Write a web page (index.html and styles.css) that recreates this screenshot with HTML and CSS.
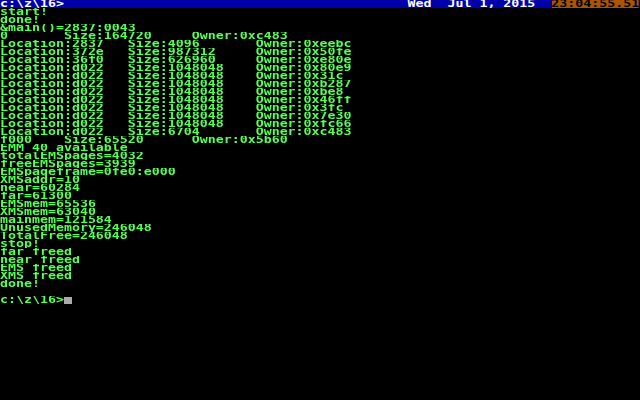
FILE: index.html
```html
<!DOCTYPE html>
<html lang="en">

<head>
    <meta charset="UTF-8">
    <title>c:\z\16</title>
    <link rel="stylesheet" href="styles.css">
</head>

<body>
    <div class="screen">
        <div class="line status"><span class="path">c:\z\16&gt;</span>                                           <span class="date">Wed  Jul 1, 2015</span>  <span class="clock">23:04:55.51</span></div>
        <div class="line">start!</div>
        <div class="line">done!</div>
        <div class="line">&amp;main()=2837:0043</div>
        <div class="line">0       Size:164720     Owner:0xc483</div>
        <div class="line">Location:2837   Size:4096       Owner:0xeebc</div>
        <div class="line">Location:372e   Size:987312     Owner:0x50fe</div>
        <div class="line">Location:36f0   Size:626960     Owner:0xe80e</div>
        <div class="line">Location:d022   Size:1048048    Owner:0x80e9</div>
        <div class="line">Location:d022   Size:1048048    Owner:0x31c</div>
        <div class="line">Location:d022   Size:1048048    Owner:0xb287</div>
        <div class="line">Location:d022   Size:1048048    Owner:0xbe8</div>
        <div class="line">Location:d022   Size:1048048    Owner:0x46ff</div>
        <div class="line">Location:d022   Size:1048048    Owner:0x3fc</div>
        <div class="line">Location:d022   Size:1048048    Owner:0x7e30</div>
        <div class="line">Location:d022   Size:1048048    Owner:0xfc66</div>
        <div class="line">Location:d022   Size:6704       Owner:0xc483</div>
        <div class="line">f000    Size:65520      Owner:0x5b60</div>
        <div class="line">EMM 40 available</div>
        <div class="line">totalEMSpages=4032</div>
        <div class="line">freeEMSpages=3939</div>
        <div class="line">EMSpageframe=0fe0:e000</div>
        <div class="line">XMSaddr=10</div>
        <div class="line">near=60284</div>
        <div class="line">far=61300</div>
        <div class="line">EMSmem=65536</div>
        <div class="line">XMSmem=63040</div>
        <div class="line">mainmem=121584</div>
        <div class="line">UnusedMemory=246048</div>
        <div class="line">TotalFree=246048</div>
        <div class="line">stop!</div>
        <div class="line">far freed</div>
        <div class="line">near freed</div>
        <div class="line">EMS freed</div>
        <div class="line">XMS freed</div>
        <div class="line">done!</div>
        <div class="line"> </div>
        <div class="line">c:\z\16&gt;<span class="cursor"> </span></div>
    </div>
</body>

</html>
```

FILE: styles.css
```css
body {
    margin: 0;
    background-color: #000;
    overflow: hidden;
}

/* 80 columns of 6px, stretched to 8px cells */
.screen {
    width: 480px;
    height: 400px;
    font-family: 'DejaVu Sans Mono', monospace;
    font-size: 9.965px;
    font-weight: bold;
    color: #55ff55;
    transform: scaleX(1.3333);
    transform-origin: left top;
}

/* each text row is one 8px cell tall, glyphs clipped to it */
.line {
    height: 8px;
    line-height: 8px;
    white-space: pre;
    overflow: hidden;
}

.status {
    background-color: #0000aa;
    color: #fff;
}

.clock {
    background-color: #aa5500;
    color: #000;
}

.cursor {
    display: inline-block;
    width: 6px;
    height: 7px;
    vertical-align: top;
    margin-top: 1px;
    background-color: #aaaaaa;
}
```
